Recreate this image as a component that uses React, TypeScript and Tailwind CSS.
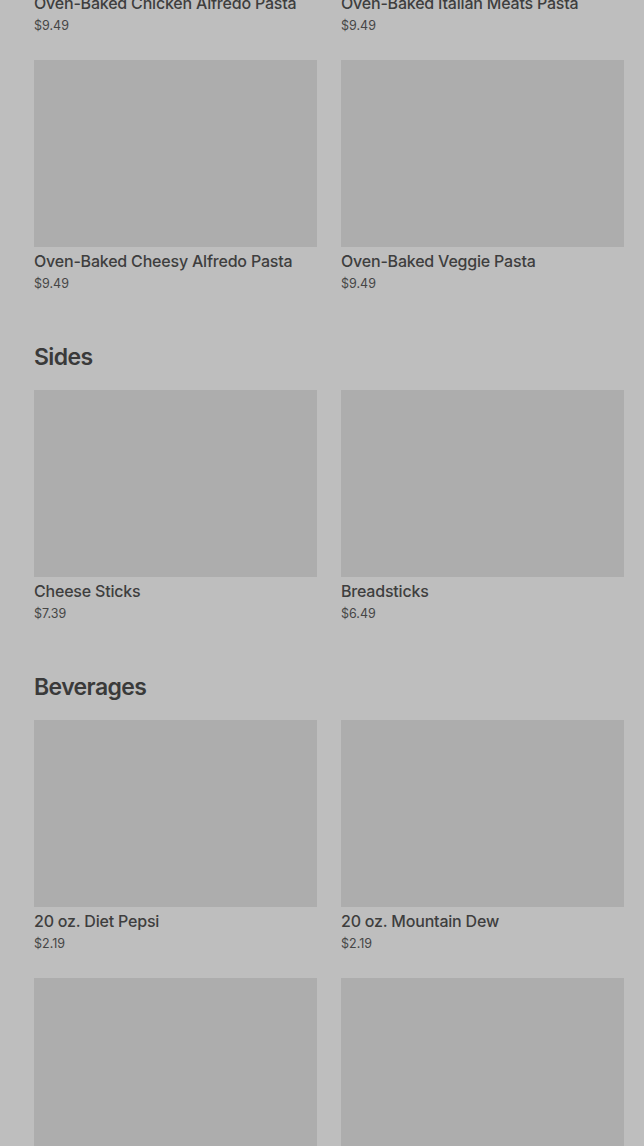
import React from "react";

type Item = { name: string; price: string };

const sections: { title?: string; items: Item[] }[] = [
  {
    items: [
      { name: "Oven-Baked Chicken Alfredo Pasta", price: "$9.49" },
      { name: "Oven-Baked Italian Meats Pasta", price: "$9.49" },
      { name: "Oven-Baked Cheesy Alfredo Pasta", price: "$9.49" },
      { name: "Oven-Baked Veggie Pasta", price: "$9.49" },
    ],
  },
  {
    title: "Sides",
    items: [
      { name: "Cheese Sticks", price: "$7.39" },
      { name: "Breadsticks", price: "$6.49" },
    ],
  },
  {
    title: "Beverages",
    items: [
      { name: "20 oz. Diet Pepsi", price: "$2.19" },
      { name: "20 oz. Mountain Dew", price: "$2.19" },
      { name: "20 oz. Pepsi", price: "$2.19" },
      { name: "20 oz. Sierra Mist", price: "$2.19" },
    ],
  },
];

function Card({ item }: { item: Item }) {
  return (
    <div className="flex flex-col">
      <div className="h-[187px] w-full bg-[#adadad]" />
      <div className="mt-[2px] text-[16px] leading-[24px] font-medium tracking-[-0.2px] text-[#3e3e3e] whitespace-nowrap">
        {item.name}
      </div>
      <div className="text-[12.5px] leading-[21px] text-[#464646]">{item.price}</div>
    </div>
  );
}

export default function App() {
  return (
    <div
      className="w-[644px] h-[1146px] overflow-hidden bg-[#bebebe]"
      style={{ fontFamily: "Inter, 'Noto Sans', sans-serif" }}
    >
      <div className="pl-[34px] pr-[20px] -mt-[198px] flex flex-col gap-[47px]">
        {sections.map((s, i) => (
          <section key={i} className="flex flex-col">
            {s.title && (
              <h2 className="text-[23px] leading-[32px] font-semibold tracking-[-0.6px] text-[#3a3a3a] mb-[17px]">
                {s.title}
              </h2>
            )}
            <div className="grid grid-cols-2 gap-x-[24px] gap-y-[24px]">
              {s.items.map((it) => (
                <Card key={it.name} item={it} />
              ))}
            </div>
          </section>
        ))}
      </div>
    </div>
  );
}
